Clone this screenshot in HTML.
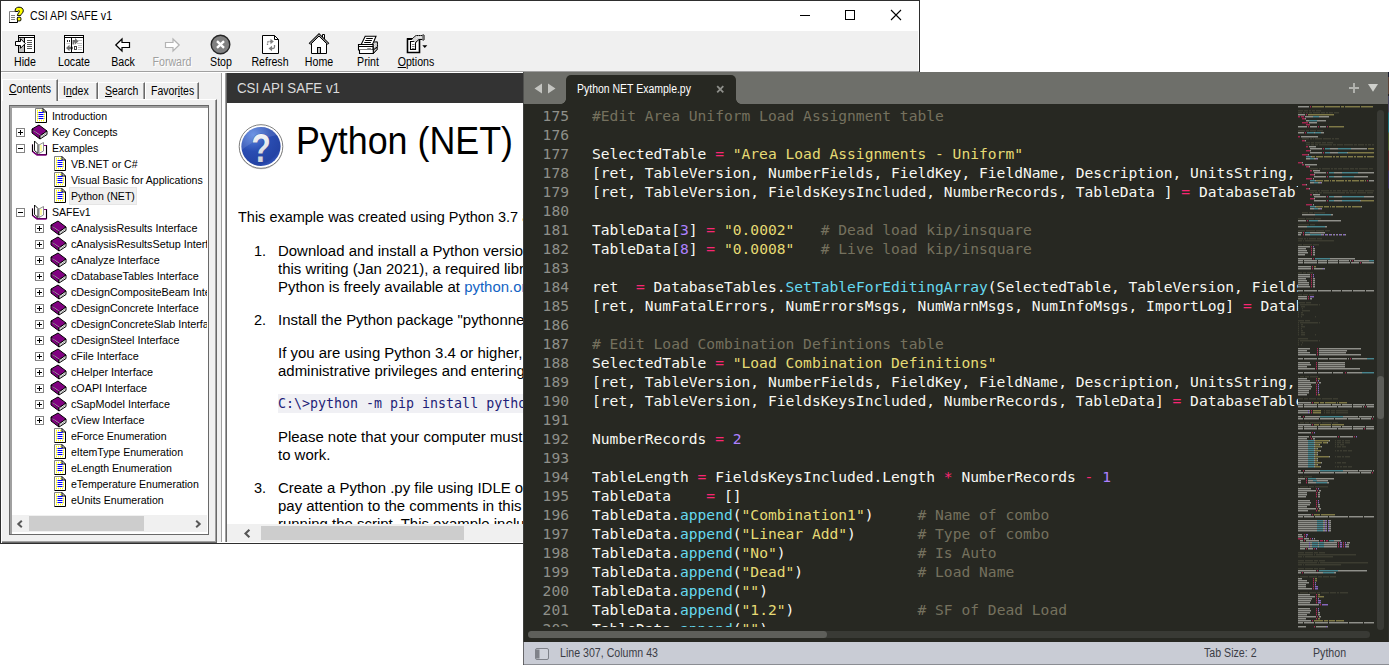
<!DOCTYPE html>
<html><head><meta charset="utf-8"><title>CSI API SAFE v1</title>
<style>
*{box-sizing:border-box;margin:0;padding:0}
html,body{width:1389px;height:665px;overflow:hidden;background:#fff}
body{position:relative;font-family:"Liberation Sans",sans-serif;font-size:12px;color:#000}
.abs{position:absolute}
svg{position:absolute;overflow:visible}
/* ---------- help window ---------- */
#help{position:absolute;left:0;top:0;width:920px;height:544px;background:#fff;overflow:hidden}
#help .frame{position:absolute;left:0;top:0;width:920px;height:544px;border:1px solid #2e2e2e;pointer-events:none}
#title{position:absolute;left:30px;top:8px;font-size:12px;line-height:16px;white-space:nowrap;transform-origin:0 50%;transform:scaleX(.885)}
#toolbar{position:absolute;left:2px;top:31px;width:916px;height:40px;background:#f0f0f0}
.tb{position:absolute;top:55px;width:60px;margin-left:-30px;text-align:center;font-size:12px;line-height:15px;white-space:nowrap;transform:scaleX(.885)}
.tb.dis{color:#a0a0a0;text-shadow:1px 1px 0 #fff}
#sep1{position:absolute;left:1px;top:71px;width:918px;height:1px;background:#a0a0a0}
#nav{position:absolute;left:2px;top:73px;width:224px;height:469px;background:#f0f0f0}

/* nav */
.tab{position:absolute;background:#f0f0f0;border-top:1px solid #fff;border-left:1px solid #fff;border-right:1px solid #696969;font-size:12px}
.tab:after{content:"";position:absolute;right:0;top:0;bottom:0;width:1px;background:#a0a0a0}
.tab span{position:absolute;white-space:nowrap;line-height:14px;transform-origin:0 50%;transform:scaleX(.875)}
.tab.selt{z-index:2}
#pane{position:absolute;left:2px;top:99px;width:215px;height:444px;border-top:1px solid #fff;border-right:1px solid #696969;border-bottom:1px solid #696969;box-shadow:inset -1px -1px 0 #a0a0a0}
#treebox{position:absolute;left:9px;top:105px;width:200px;height:430px;border:1px solid #696969;background:#fff;overflow:hidden}
#treebox:before{content:"";position:absolute;left:0;top:0;width:198px;height:428px;border:solid;border-width:2px 1px 2px 2px;border-color:#a0a0a0 #fff #fff #a0a0a0;pointer-events:none;z-index:3}
#tree{position:absolute;left:2px;top:2px;width:195px;height:407px;overflow:hidden}
.row{position:absolute;left:0;height:16px;width:400px}
.row .t{position:absolute;top:0;font-size:11.5px;line-height:16px;white-space:nowrap;transform-origin:0 50%;transform:scaleX(.918);padding:0 1px}
.row .t.wi{transform:scaleX(.938)}
.row .t.sel{background:#f0f0f0;outline:1px solid #e5e5e5}
.row .ic{top:0}
.pm{position:absolute;top:4px;width:9px;height:9px;border:1px solid #848484;background:#fff}
.pm:before{content:"";position:absolute;left:1px;top:3px;width:5px;height:1px;background:#000}
.pm.plus:after{content:"";position:absolute;left:3px;top:1px;width:1px;height:5px;background:#000}
#hsb{position:absolute;left:2px;top:409px;width:195px;height:17px;background:#f0f0f0}
#hsb .thumb{position:absolute;left:17px;top:1px;width:115px;height:15px;background:#cdcdcd}
#split{position:absolute;left:217px;top:73px;width:10px;height:469px;background:linear-gradient(90deg,#f0f0f0 0,#f0f0f0 4px,#a0a0a0 4px,#a0a0a0 5px,#fff 5px,#fff 8px,#a0a0a0 8px,#a0a0a0 9px,#696969 9px)}

/* content pane */
#cpane{position:absolute;left:227px;top:73px;width:691px;height:469px;background:#fff;overflow:hidden}
#cpane>*{margin-left:1px}
#chead{position:absolute;left:0;top:0;width:691px;height:30px;background:#333;margin-left:0!important}
#chead span{position:absolute;left:10px;top:7px;font-size:13.8px;line-height:18px;color:#dcdcdc;white-space:nowrap;transform-origin:0 50%;transform:scaleX(.966)}
#h1{position:absolute;left:68px;top:43px;font-size:39.5px;line-height:48px;white-space:nowrap;transform-origin:0 50%;transform:scaleX(.907)}
.p{position:absolute;font-size:14.67px;line-height:18px;white-space:nowrap;transform-origin:0 50%;transform:scaleX(.988)}
.p.w{transform:scaleX(1.02)}
.lnk{color:#1364c4}
#cmd{position:absolute;left:50px;top:321px;width:700px;height:19px;background:#f0f0f4;color:#1e1e78;font-family:"DejaVu Sans Mono","Liberation Mono",monospace;font-size:13.3px;line-height:19px;white-space:pre}
#chsb{position:absolute;left:0;top:451px;width:691px;height:18px;background:#f0f0f0;margin-left:0!important}
#chsb .thumb{position:absolute;left:34px;top:2px;width:203px;height:14px;background:#cdcdcd}

/* sublime */
#sublb{position:absolute;left:523px;top:72px;width:1px;height:593px;background:rgba(70,70,70,.75)}
#subl{position:absolute;left:523px;top:72px;width:866px;height:593px;background:#272822;overflow:hidden}
#tabbar{position:absolute;left:0;top:0;width:866px;height:32px;background:#6e6f6a}
#stab{position:absolute;left:43px;top:3px;width:170px;height:29px;background:#272822;border-radius:5px 5px 0 0}
#stab:before,#stab:after{content:"";position:absolute;bottom:0;width:5px;height:5px}
#stab:before{left:-5px;background:radial-gradient(circle at 0 0,rgba(39,40,34,0) 4.5px,#272822 5px)}
#stab:after{right:-5px;background:radial-gradient(circle at 100% 0,rgba(39,40,34,0) 4.5px,#272822 5px)}
#stab span{position:absolute;left:11px;top:7px;font-size:12px;line-height:15px;color:#fff;white-space:nowrap;transform-origin:0 50%;transform:scaleX(.873)}
#editor{position:absolute;left:0;top:32px;width:866px;height:538px;background:#272822;overflow:hidden}
#gutter,#code{position:absolute;top:2px;font-family:"DejaVu Sans Mono","Liberation Mono",monospace;font-size:14.62px;line-height:19px;white-space:pre;height:521px;overflow:hidden}
#gutter{left:0;width:46px;text-align:right;color:#8f908a}
#code{left:69px;width:706px;color:#f8f8f2}
#code .c{color:#75715e}#code .s{color:#e6db74}#code .k{color:#f92672}#code .n{color:#ae81ff}#code .f{color:#66d9ef}
#minimap{position:absolute;left:775px;top:0;width:78px;height:527px;overflow:hidden}
#vsb{position:absolute;left:854px;top:6px;width:7px;height:520px;border-radius:3.5px;background:#393a35}
#vsb i{position:absolute;left:0;top:266px;width:7px;height:43px;border-radius:3.5px;background:#5c5d58}
#edge{position:absolute;left:865px;top:0;width:1px;height:570px;background:linear-gradient(#1a1d30 0,#1a1d30 5px,#5e4337 5px,#5e4337 22px,#222 22px,#222 24px,#494560 24px,#494560 40px,#1c6f7c 41px,#1c6f7c 60px,#4b5a2c 61px,#4b5a2c 78px,#5a2828 79px,#5a2828 98px,#3c3260 99px,#3c3260 116px,#2f302b 117px)}
#hsbar{position:absolute;left:5px;top:527px;width:842px;height:7px;border-radius:3.5px;background:#393a35}
#hsbar i{position:absolute;left:0;top:0;width:299px;height:7px;border-radius:3.5px;background:#5e5f5a}
#status{position:absolute;left:0;top:570px;width:866px;height:23px;background:#c9ccd5;border-bottom:1px solid #8b8d93}
#status span{position:absolute;top:4px;font-size:12px;line-height:15px;color:#3b3d45;white-space:nowrap;transform-origin:0 50%;transform:scaleX(.885)}
</style></head>
<body>
<div id="help">
  <div id="title">CSI API SAFE v1</div>
  <div id="toolbar"></div>
  <div class="tb" style="left:25px">Hide</div>
  <div class="tb" style="left:74px">Locate</div>
  <div class="tb" style="left:123px">Back</div>
  <div class="tb dis" style="left:172px">Forward</div>
  <div class="tb" style="left:221px">Stop</div>
  <div class="tb" style="left:270px">Refresh</div>
  <div class="tb" style="left:319px">Home</div>
  <div class="tb" style="left:368px">Print</div>
  <div class="tb" style="left:416px"><u>O</u>ptions</div>
  <!--ICONS-->
<!-- title icon -->
<svg style="left:9px;top:7px" width="16" height="16" viewBox="0 0 16 16">
  <path d="M.5 4.5H7.5V15.5H.5Z" fill="#fff" stroke="none"/>
  <path d="M.5 15V4.5H6" stroke="#808080" fill="none"/>
  <path d="M0 15.5H8.5V10" stroke="#000" fill="none"/>
  <path d="M2 8.5H6M2 10.5H6M2 12.5H6" stroke="#808080" fill="none"/>
  <path d="M6.2 3.2C6.2 1 8 .2 10 .2C12.6 .2 14.3 1.5 14.3 3.8C14.3 6 12 6.8 11.6 8.6H8.4C8.6 6.2 10.4 5.6 10.4 4.2C10.4 3.4 9.2 3.4 9 4.4L6.2 4.6Z" fill="#ff0" stroke="#000" stroke-width="1"/>
  <rect x="8.3" y="10.3" width="3.6" height="3.6" rx="1" fill="#ff0" stroke="#000" stroke-width="1"/>
</svg>
<!-- window controls -->
<svg style="left:800px;top:9px" width="104" height="13">
  <path d="M0 6.5H10" stroke="#000" stroke-width="1"/>
  <rect x="45.500" y="1.500" width="9" height="9" fill="none" stroke="#000" stroke-width="1"/>
  <path d="M91 1L101 11M101 1L91 11" stroke="#000" stroke-width="1.1" fill="none"/>
</svg>
<!-- Hide -->
<svg style="left:15px;top:35px" width="21" height="19">
  <rect x="3.5" y=".5" width="16" height="17" fill="#fff" stroke="#000"/>
  <path d="M4 2.500H19" stroke="#000"/>
  <rect x="4" y="3" width="5" height="14" fill="#c0c0c0"/>
  <path d="M9.500 3V17" stroke="#000"/>
  <path d="M12 5.500H17M12 7.500H17M12 9.500H17M12 11.500H17M12 13.500H17" stroke="#555"/>
  <path d="M.5 6.500H5.500V3.700L10.300 8.500L5.500 13.300V10.500H.5Z" fill="#fff" stroke="#000"/>
</svg>
<!-- Locate -->
<svg style="left:63px;top:35px" width="22" height="19">
  <rect x="1.500" y=".5" width="19" height="17" fill="#fff" stroke="#000"/>
  <path d="M2 2.500H20" stroke="#000"/>
  <path d="M4 5.500h1M6 5.500h1M4 6.500h1M6 6.500h1" stroke="#333"/>
  <path d="M3.500 8.500H7" stroke="#c8c8c8"/>
  <path d="M15 5.500H19M14 8.500H19M15 10.500H19M15 12.500H19M15 14.500H19" stroke="#c0c0c0"/>
  <path d="M9.500 5H12V3L15.500 6.300L12 9.500V7.600H11.300V9.500H9.500Z" fill="#707070"/>
  <path d="M10 11.800H6.500V9.800L3 13L6.500 16.200V14.200H10Z" fill="#707070"/>
  <path d="M8.500 3V17" stroke="#000" stroke-width="1"/>
  <rect x="11.500" y="11.500" width="2" height="3" fill="#fff" stroke="#333" stroke-width=".9"/>
</svg>
<!-- Back -->
<svg style="left:115px;top:37.500px" width="16" height="15"><path d="M.8 7L7 1V4.500H14.500V9.500H7V13Z" fill="#fff" stroke="#000" stroke-width="1.2" stroke-linejoin="miter"/></svg>
<!-- Forward -->
<svg style="left:164px;top:37.500px" width="16" height="15"><path d="M15.200 7L9 1V4.500H1.500V9.500H9V13Z" fill="#fff" stroke="#b4b4b4" stroke-width="1.200"/></svg>
<!-- Stop -->
<svg style="left:210px;top:34px" width="21" height="21"><circle cx="10.500" cy="10.500" r="9.300" fill="#808080" stroke="#262626" stroke-width="1.400"/><path d="M7 7.200L14 13.800M14 7.200L7 13.800" stroke="#fff" stroke-width="2.400" fill="none"/></svg>
<!-- Refresh -->
<svg style="left:262px;top:35px" width="18" height="20">
  <path d="M.5 .5H12.500L16.500 4.500V18.500H.5Z" fill="#fff" stroke="#000" stroke-width="1"/>
  <path d="M12.500 .5V4.500H16.500" fill="none" stroke="#000" stroke-width="1"/>
  <path d="M5.500 10V8Q5.500 6.500 7 6.500H9" fill="none" stroke="#808080" stroke-width="1.300" stroke-dasharray="1.600 .7"/>
  <path d="M8.500 3.800L11.800 6.500L8.500 9.200Z" fill="#808080"/>
  <path d="M12.500 10V12Q12.500 13.500 11 13.500H9.500" fill="none" stroke="#808080" stroke-width="1.300"/>
  <path d="M10 10.800L6.500 13.500L10 16.200Z" fill="#808080"/>
</svg>
<!-- Home -->
<svg style="left:308px;top:33px" width="22" height="22">
  <path d="M3.500 10.500V20.500H18.500V10.500L11 3Z" fill="#fff" stroke="#000" stroke-width="1"/>
  <path d="M14.500 6V1.500H16.500V8" fill="#fff" stroke="#000" stroke-width="1"/>
  <path d="M1.500 11L11 1.700L20.500 11" fill="none" stroke="#000" stroke-width="2.400" stroke-linejoin="miter"/>
  <path d="M1.800 10.800L11 1.800L20.200 10.800" fill="none" stroke="#fff" stroke-width=".8"/>
  <rect x="9.500" y="14.500" width="3" height="6" fill="#c0c0c0" stroke="#000" stroke-width="1"/>
</svg>
<!-- Print -->
<svg style="left:357px;top:35px" width="22" height="20">
  <path d="M4.200 9.500L8.200 1.300H19L15.600 9.500Z" fill="#fff" stroke="#000" stroke-width="1.100"/>
  <path d="M9.200 3.500H15.800M8.200 5.500H14.900M7.200 7.500H13.800" stroke="#000" stroke-width="1"/>
  <path d="M16 9.500L16.500 7.200L20.300 6.800L20.600 11.600L16.300 15.200Z" fill="#c8c8c8" stroke="#000" stroke-width="1"/>
  <path d="M16.500 8.500L18.500 10.500M18 7.500L20 9.500M16.500 10.500L18 12" stroke="#fff" stroke-width=".7"/>
  <path d="M1.500 9.500H16V15H1.500Z" fill="#fff" stroke="#000" stroke-width="1.100"/>
  <path d="M1.500 11.500H16" stroke="#000" stroke-width="1"/>
  <path d="M10.200 13.500H14" stroke="#909090" stroke-width="1.100"/>
  <path d="M16.300 18.500L20 14.500V12" fill="none" stroke="#000" stroke-width="1"/>
  <path d="M16.300 15.200L20 12V14.500L16.300 18.500Z" fill="#c8c8c8" stroke="#000" stroke-width=".9"/>
  <path d="M2.500 15V18.500H16.300V15" fill="#fff" stroke="#000" stroke-width="1.100"/>
</svg>
<!-- Options -->
<svg style="left:406px;top:34px" width="24" height="21">
  <path d="M1.500 5H13.500V18.500H1.500Z" fill="#fff" stroke="#000" stroke-width="1.600"/>
  <path d="M1 5H14" stroke="#000" stroke-width="2"/>
  <path d="M4.500 7.500H10L9.500 9V15.500H4.500Z" fill="#fff" stroke="#000" stroke-width="1.100"/>
  <path d="M6 10.500H8.500M6 12.500H8.500M6 14.500H8.500" stroke="#808080" stroke-width="1"/>
  <path d="M5.500 5.500L10 1.500H16.500V1H18V6H16.500V5.500H13L9.500 8.500" fill="#d0d0d0" stroke="#000" stroke-width="1"/>
  <path d="M7 5L10.500 2H16M8.500 6L11.500 3.500H16" stroke="#fff" stroke-width=".8" stroke-dasharray="1 1" fill="none"/>
  <path d="M17 1V6" stroke="#707070" stroke-width="1.500"/>
  <path d="M16.300 11.200H21.300L18.800 13.900Z" fill="#000"/>
</svg>

<!--/ICONS-->
  <div id="sep1"></div>
  <div id="nav"></div>
  <!--NAV-->
<svg width="0" height="0" style="position:absolute"><defs>
<g id="pg"><path d="M0.5 0.5H8L11.5 4V14.5H0.5Z" fill="#fff"/><path d="M0.5 0.5V14.5" stroke="#808080" fill="none"/><path d="M0.5 0.5H8" stroke="#808080" fill="none"/><path d="M0.5 14.5H11.5V4L8 0.5V4H11.5" stroke="#000" fill="none"/><path d="M2 2h1M4 2h1M6 2h1M2 4h1M2 6h1M2 8h1M2 10h1M2 12h1M4 12h1M6 12h1M8 12h1M9 6h1M9 8h1M9 10h1" stroke="#ff0" stroke-width="1.4" fill="none" transform="translate(0,.5)"/><path d="M3.5 4.5h5M3.5 6.5h5M3.5 8.5h5M3.5 10.5h5" stroke="#00f" stroke-width="1.1" fill="none"/></g>
<g id="bk"><path d="M1 5L8 1L16 7L9 12Z" fill="#800080" stroke="#000" stroke-width="1"/><path d="M1 5V9L9 15V12Z" fill="#800080" stroke="#000" stroke-width="1"/><path d="M9 12L16 7V10.5L9 15Z" fill="#fff" stroke="#000" stroke-width="1"/><path d="M2.5 6.5L9.5 11.5" stroke="#d8a0d8" stroke-width=".8"/><path d="M10.5 12.8L15 9.5" stroke="#808080" stroke-width=".8"/></g>
<g id="ob"><path d="M1.5 4.5V11.5L6 14.5H15.5V5.5H13" fill="#fff" stroke="#800080" stroke-width="1.2"/><path d="M1.5 4.5V11.5L6 14.5H15.5V5.5" fill="none" stroke="#000" stroke-width="1"/><path d="M3.5 1L7 4.5V13.5L3.5 10.5Z" fill="#fff" stroke="#000" stroke-width=".9"/><path d="M8 5L12.5 2.5V11L8 13.5Z" fill="#fff" stroke="#808080" stroke-width=".9"/><path d="M10 5.5v1M10 7.5v1M10 9.5v1" stroke="#ff0" stroke-width="1.4"/><path d="M2 12L6 15H15.5" stroke="#800080" stroke-width="1.3" fill="none"/></g>
</defs></svg>
<div id="tabs">
  <div class="tab selt" style="left:2px;top:79px;width:56px;height:22px"><span style="left:5.500px;top:2px"><u>C</u>ontents</span></div>
  <div class="tab" style="left:58px;top:82px;width:40px;height:18px"><span style="left:4px;top:1px">I<u>n</u>dex</span></div>
  <div class="tab" style="left:98px;top:82px;width:47px;height:18px"><span style="left:6px;top:1px"><u>S</u>earch</span></div>
  <div class="tab" style="left:145px;top:82px;width:54px;height:18px"><span style="left:5px;top:1px">Favor<u>i</u>tes</span></div>
</div>
<div id="pane"></div>
<div id="treebox">
<div id="tree">
<div class="row" style="top:0px"><svg class="ic" style="left:23px" width="13" height="16"><use href="#pg"/></svg><span class="t" style="left:39px">Introduction</span></div>
<div class="row" style="top:16px"><i class="pm plus" style="left:4px"></i><svg class="ic" style="left:19px" width="17" height="16"><use href="#bk"/></svg><span class="t" style="left:39px">Key Concepts</span></div>
<div class="row" style="top:32px"><i class="pm minus" style="left:4px"></i><svg class="ic" style="left:19px" width="17" height="16"><use href="#ob"/></svg><span class="t" style="left:39px">Examples</span></div>
<div class="row" style="top:48px"><svg class="ic" style="left:42px" width="13" height="16"><use href="#pg"/></svg><span class="t" style="left:58px">VB.NET or C#</span></div>
<div class="row" style="top:64px"><svg class="ic" style="left:42px" width="13" height="16"><use href="#pg"/></svg><span class="t" style="left:58px">Visual Basic for Applications</span></div>
<div class="row" style="top:80px"><svg class="ic" style="left:42px" width="13" height="16"><use href="#pg"/></svg><span class="t sel" style="left:58px">Python (NET)</span></div>
<div class="row" style="top:96px"><i class="pm minus" style="left:4px"></i><svg class="ic" style="left:19px" width="17" height="16"><use href="#ob"/></svg><span class="t" style="left:39px">SAFEv1</span></div>
<div class="row" style="top:112px"><i class="pm plus" style="left:23px"></i><svg class="ic" style="left:38px" width="17" height="16"><use href="#bk"/></svg><span class="t wi" style="left:58px">cAnalysisResults Interface</span></div>
<div class="row" style="top:128px"><i class="pm plus" style="left:23px"></i><svg class="ic" style="left:38px" width="17" height="16"><use href="#bk"/></svg><span class="t wi" style="left:58px">cAnalysisResultsSetup Interface</span></div>
<div class="row" style="top:144px"><i class="pm plus" style="left:23px"></i><svg class="ic" style="left:38px" width="17" height="16"><use href="#bk"/></svg><span class="t wi" style="left:58px">cAnalyze Interface</span></div>
<div class="row" style="top:160px"><i class="pm plus" style="left:23px"></i><svg class="ic" style="left:38px" width="17" height="16"><use href="#bk"/></svg><span class="t wi" style="left:58px">cDatabaseTables Interface</span></div>
<div class="row" style="top:176px"><i class="pm plus" style="left:23px"></i><svg class="ic" style="left:38px" width="17" height="16"><use href="#bk"/></svg><span class="t wi" style="left:58px">cDesignCompositeBeam Interface</span></div>
<div class="row" style="top:192px"><i class="pm plus" style="left:23px"></i><svg class="ic" style="left:38px" width="17" height="16"><use href="#bk"/></svg><span class="t wi" style="left:58px">cDesignConcrete Interface</span></div>
<div class="row" style="top:208px"><i class="pm plus" style="left:23px"></i><svg class="ic" style="left:38px" width="17" height="16"><use href="#bk"/></svg><span class="t wi" style="left:58px">cDesignConcreteSlab Interface</span></div>
<div class="row" style="top:224px"><i class="pm plus" style="left:23px"></i><svg class="ic" style="left:38px" width="17" height="16"><use href="#bk"/></svg><span class="t wi" style="left:58px">cDesignSteel Interface</span></div>
<div class="row" style="top:240px"><i class="pm plus" style="left:23px"></i><svg class="ic" style="left:38px" width="17" height="16"><use href="#bk"/></svg><span class="t wi" style="left:58px">cFile Interface</span></div>
<div class="row" style="top:256px"><i class="pm plus" style="left:23px"></i><svg class="ic" style="left:38px" width="17" height="16"><use href="#bk"/></svg><span class="t wi" style="left:58px">cHelper Interface</span></div>
<div class="row" style="top:272px"><i class="pm plus" style="left:23px"></i><svg class="ic" style="left:38px" width="17" height="16"><use href="#bk"/></svg><span class="t wi" style="left:58px">cOAPI Interface</span></div>
<div class="row" style="top:288px"><i class="pm plus" style="left:23px"></i><svg class="ic" style="left:38px" width="17" height="16"><use href="#bk"/></svg><span class="t wi" style="left:58px">cSapModel Interface</span></div>
<div class="row" style="top:304px"><i class="pm plus" style="left:23px"></i><svg class="ic" style="left:38px" width="17" height="16"><use href="#bk"/></svg><span class="t wi" style="left:58px">cView Interface</span></div>
<div class="row" style="top:320px"><svg class="ic" style="left:42px" width="13" height="16"><use href="#pg"/></svg><span class="t" style="left:58px">eForce Enumeration</span></div>
<div class="row" style="top:336px"><svg class="ic" style="left:42px" width="13" height="16"><use href="#pg"/></svg><span class="t" style="left:58px">eItemType Enumeration</span></div>
<div class="row" style="top:352px"><svg class="ic" style="left:42px" width="13" height="16"><use href="#pg"/></svg><span class="t" style="left:58px">eLength Enumeration</span></div>
<div class="row" style="top:368px"><svg class="ic" style="left:42px" width="13" height="16"><use href="#pg"/></svg><span class="t" style="left:58px">eTemperature Enumeration</span></div>
<div class="row" style="top:384px"><svg class="ic" style="left:42px" width="13" height="16"><use href="#pg"/></svg><span class="t" style="left:58px">eUnits Enumeration</span></div>
</div>
  <div id="hsb"><i class="thumb"></i>
    <svg style="left:5px;top:5px" width="6" height="9"><path d="M4.800 .8L1.300 4L4.800 7.200" fill="none" stroke="#585858" stroke-width="2"/></svg>
    <svg style="left:183px;top:5px" width="6" height="9"><path d="M1.200 .8L4.700 4L1.200 7.200" fill="none" stroke="#585858" stroke-width="2"/></svg>
  </div>
</div>
<div id="split"></div>

<!--/NAV-->
  <!--CONTENT-->
<div id="cpane">
  <div id="chead"><span>CSI API SAFE v1</span></div>
  <svg style="left:10px;top:50px" width="46" height="47" viewBox="0 0 46 47">
    <defs>
      <radialGradient id="qg" cx="0.3" cy="0.2" r="0.95"><stop offset="0" stop-color="#5a86e0"/><stop offset="0.45" stop-color="#2a4db2"/><stop offset="0.8" stop-color="#2443a4"/><stop offset="1" stop-color="#4468d0"/></radialGradient>
      <linearGradient id="qs" x1="0" y1="0" x2="0" y2="1"><stop offset="0" stop-color="#fff"/><stop offset="1" stop-color="#c4c8d2"/></linearGradient>
    </defs>
    <circle cx="23" cy="24.300" r="22" fill="#777" opacity=".45"/>
    <circle cx="23" cy="23.500" r="21.800" fill="#fff" stroke="#808080" stroke-width="1"/>
    <circle cx="23" cy="23.500" r="19.600" fill="url(#qg)"/>
    <path d="M4 27 A19.500 19.500 0 0 1 39 12 C28 14 12 19 4 27Z" fill="#fff" opacity=".12"/>
    <text transform="translate(23,38.800) scale(.78,1)" text-anchor="middle" font-family="Liberation Sans, sans-serif" font-weight="bold" font-size="41" fill="url(#qs)" stroke="#1c348a" stroke-width=".6" paint-order="stroke">?</text>
  </svg>
  <div id="h1">Python (NET)</div>
  <div class="p" style="left:10px;top:135px">This example was created using Python 3.7 and</div>
  <div class="p" style="left:26px;top:169px">1.</div>
  <div class="p w" style="left:50px;top:169px">Download and install a Python version for Windows. At the time of<br>this writing (Jan 2021), a required library was only available for<br>Python is freely available at <span class="lnk">python.org</span></div>
  <div class="p" style="left:26px;top:238px">2.</div>
  <div class="p w" style="left:50px;top:238px">Install the Python package "pythonnet" for your Python installation.</div>
  <div class="p w" style="left:50px;top:271px">If you are using Python 3.4 or higher, you can do this by opening with<br>administrative privileges and entering the following command</div>
  <div id="cmd">C:\&gt;python -m pip install pythonnet</div>
  <div class="p w" style="left:50px;top:355px">Please note that your computer must be connected to the internet<br>to work.</div>
  <div class="p" style="left:26px;top:406px">3.</div>
  <div class="p w" style="left:50px;top:406px">Create a Python .py file using IDLE or any text editor and<br>pay attention to the comments in this example before<br>running the script. This example includes</div>
  <div id="chsb"><i class="thumb"></i>
    <svg style="left:17px;top:5px" width="7" height="10"><path d="M5.400 .8L1.500 4.500L5.400 8.200" fill="none" stroke="#555" stroke-width="2.100"/></svg>
  </div>
</div>

<!--/CONTENT-->
  <div class="frame"></div>
</div>
<!--SUBLIME-->
<div id="subl">
  <div id="tabbar">
    <svg style="left:11px;top:11px" width="24" height="11"><path d="M8 0.5V10.5L0.5 5.5Z M14 0.5V10.5L21.5 5.5Z" fill="#c4c5c1"/></svg>
    <div id="stab"><span>Python NET Example.py</span>
      <svg style="left:150px;top:10px" width="9" height="9"><path d="M1.200 1.200L7.300 7.300M7.300 1.200L1.200 7.300" stroke="#8e8f8a" stroke-width="1.800" fill="none"/></svg>
    </div>
    <svg style="left:826px;top:11px" width="34" height="10"><path d="M0 5H10M5 0V10" stroke="#b3b4b0" stroke-width="1.9" fill="none"/><path d="M19 1H29L24 8.700Z" fill="#cfd0cc"/></svg>
  </div>
  <div id="editor">
<div id="gutter">175
176
177
178
179
180
181
182
183
184
185
186
187
188
189
190
191
192
193
194
195
196
197
198
199
200
201
202</div>
<div id="code"><span class="c">#Edit Area Uniform Load Assignment table</span>

SelectedTable <span class="k">=</span> <span class="s">"Area Load Assignments - Uniform"</span>
[ret, TableVersion, NumberFields, FieldKey, FieldName, Description, UnitsString, isImportable] <span class="k">=</span> DatabaseTables.<span class="f">GetAllFieldsInTable</span>(SelectedTable)
[ret, TableVersion, FieldsKeysIncluded, NumberRecords, TableData ] <span class="k">=</span> DatabaseTables.<span class="f">GetTableForEditingArray</span>(SelectedTable)

TableData[<span class="n">3</span>] <span class="k">=</span> <span class="s">"0.0002"</span>   <span class="c"># Dead load kip/insquare</span>
TableData[<span class="n">8</span>] <span class="k">=</span> <span class="s">"0.0008"</span>   <span class="c"># Live load kip/insquare</span>

ret  <span class="k">=</span> DatabaseTables.<span class="f">SetTableForEditingArray</span>(SelectedTable, TableVersion, FieldsKeysIncluded, NumberRecords, TableData)
[ret, NumFatalErrors, NumErrorsMsgs, NumWarnMsgs, NumInfoMsgs, ImportLog] <span class="k">=</span> DatabaseTables.<span class="f">ApplyEditedTables</span>(<span class="n">True</span>)

<span class="c"># Edit Load Combination Defintions table</span>
SelectedTable <span class="k">=</span> <span class="s">"Load Combination Definitions"</span>
[ret, TableVersion, NumberFields, FieldKey, FieldName, Description, UnitsString, isImportable] <span class="k">=</span> DatabaseTables.<span class="f">GetAllFieldsInTable</span>(SelectedTable)
[ret, TableVersion, FieldsKeysIncluded, NumberRecords, TableData] <span class="k">=</span> DatabaseTables.<span class="f">GetTableForEditingArray</span>(SelectedTable)

NumberRecords <span class="k">=</span> <span class="n">2</span>

TableLength <span class="k">=</span> FieldsKeysIncluded.Length <span class="k">*</span> NumberRecords <span class="k">-</span> <span class="n">1</span>
TableData    <span class="k">=</span> []
TableData.<span class="f">append</span>(<span class="s">"Combination1"</span>)     <span class="c"># Name of combo</span>
TableData.<span class="f">append</span>(<span class="s">"Linear Add"</span>)       <span class="c"># Type of combo</span>
TableData.<span class="f">append</span>(<span class="s">"No"</span>)               <span class="c"># Is Auto</span>
TableData.<span class="f">append</span>(<span class="s">"Dead"</span>)             <span class="c"># Load Name</span>
TableData.<span class="f">append</span>(<span class="s">""</span>)
TableData.<span class="f">append</span>(<span class="s">"1.2"</span>)              <span class="c"># SF of Dead Load</span>
TableData.<span class="f">append</span>(<span class="s">""</span>)</div>
    <div id="minimap"><svg style="left:0;top:0" width="78" height="528" shape-rendering="crispEdges">
<path d="M0 2.5h11M0 10.5h7M7 12.5h8M21 12.5h10M7 14.5h1M8 16.5h3M19 16.5h9M11 18.5h8M0 22.5h9M12 22.5h7M22 22.5h6M0 28.5h6M16 28.5h1M23 28.5h3M3 32.5h17M7 36.5h1M11 42.5h7M12 44.5h12M32 44.5h8M53 44.5h16M12 46.5h1M12 48.5h12M32 48.5h8M49 48.5h1M10 50.5h1M13 52.5h1M8 54.5h4M16 54.5h2M19 54.5h1M4 58.5h1M7 60.5h12M11 62.5h1M15 66.5h7M16 68.5h12M36 68.5h8M60 68.5h16M16 70.5h1M16 72.5h12M36 72.5h8M56 72.5h14M15 74.5h1M17 76.5h1M71 76.5h5M12 78.5h4M20 78.5h2M23 78.5h1M8 80.5h1M11 84.5h1M15 90.5h7M16 92.5h12M36 92.5h8M66 92.5h10M16 94.5h1M16 96.5h12M36 96.5h8M62 96.5h1M15 100.5h1M17 102.5h1M63 102.5h1M12 104.5h4M20 104.5h2M23 104.5h1M4 110.5h13M33 110.5h2M0 116.5h8M20 116.5h23M0 122.5h9M27 122.5h2M0 128.5h4M12 128.5h15M0 130.5h3M7 130.5h5M23 130.5h1M25 130.5h1M29 130.5h1M33 130.5h1M36 130.5h1M39 130.5h1M43 130.5h1M47 130.5h1M0 142.5h12M0 144.5h8M15 144.5h2M0 146.5h9M15 146.5h2M0 148.5h10M15 148.5h2M0 150.5h7M15 150.5h2M0 154.5h14M32 154.5h25M0 156.5h5M6 156.5h13M20 156.5h9M30 156.5h10M41 156.5h10M52 156.5h1M56 156.5h15M0 158.5h5M6 158.5h13M20 158.5h9M30 158.5h10M41 158.5h11M53 158.5h8M64 158.5h12M0 162.5h13M0 164.5h13M16 164.5h9M26 164.5h1M0 170.5h12M0 172.5h12M0 174.5h8M15 174.5h2M0 176.5h9M15 176.5h2M0 178.5h11M15 178.5h2M0 180.5h11M15 180.5h2M0 182.5h12M15 182.5h2M0 186.5h5M6 186.5h13M20 186.5h13M34 186.5h9M44 186.5h10M55 186.5h12M68 186.5h8M0 192.5h9M0 194.5h9M12 194.5h2M0 244.5h12M21 244.5h42M0 246.5h9M21 246.5h28M0 248.5h12M21 248.5h27M0 250.5h18M21 250.5h42M0 254.5h5M6 254.5h13M20 254.5h10M31 254.5h18M50 254.5h1M54 254.5h15M0 258.5h12M20 258.5h27M0 260.5h13M20 260.5h27M0 262.5h9M20 262.5h27M0 264.5h17M20 264.5h42M0 268.5h5M6 268.5h13M20 268.5h14M35 268.5h10M49 268.5h15M0 274.5h9M0 276.5h12M0 278.5h18M21 278.5h2M0 280.5h13M0 282.5h14M0 284.5h13M0 286.5h11M0 288.5h11M0 290.5h9M0 298.5h13M0 300.5h5M6 300.5h13M20 300.5h13M34 300.5h9M44 300.5h10M55 300.5h12M68 300.5h8M0 302.5h5M6 302.5h13M20 302.5h19M40 302.5h14M55 302.5h9M65 302.5h1M69 302.5h7M0 306.5h10M11 306.5h1M0 308.5h10M11 308.5h1M0 312.5h3M7 312.5h15M45 312.5h15M61 312.5h13M75 312.5h1M0 314.5h5M6 314.5h15M22 314.5h14M37 314.5h12M50 314.5h12M63 314.5h10M0 320.5h13M0 322.5h5M6 322.5h13M20 322.5h13M34 322.5h9M44 322.5h10M55 322.5h12M68 322.5h8M0 324.5h5M6 324.5h13M20 324.5h19M40 324.5h14M55 324.5h10M68 324.5h8M0 328.5h13M0 332.5h11M14 332.5h25M42 332.5h13M0 334.5h9M15 334.5h2M0 336.5h10M16 336.5h1M31 336.5h1M0 338.5h10M16 338.5h1M29 338.5h1M0 340.5h10M16 340.5h1M21 340.5h1M0 342.5h10M16 342.5h1M23 342.5h1M0 344.5h10M16 344.5h1M19 344.5h1M0 346.5h10M16 346.5h1M22 346.5h1M0 348.5h10M16 348.5h1M19 348.5h1M0 350.5h10M16 350.5h1M19 350.5h1M0 352.5h10M16 352.5h1M31 352.5h1M0 354.5h10M16 354.5h1M19 354.5h1M0 356.5h10M16 356.5h1M19 356.5h1M0 358.5h10M16 358.5h1M23 358.5h1M0 360.5h10M16 360.5h1M19 360.5h1M0 362.5h10M16 362.5h1M22 362.5h1M0 366.5h3M7 366.5h15M45 366.5h15M61 366.5h13M75 366.5h1M0 368.5h5M6 368.5h15M22 368.5h14M37 368.5h12M50 368.5h12M63 368.5h10M0 374.5h7M18 374.5h18M0 376.5h3M10 376.5h5M19 376.5h11M0 378.5h3M10 378.5h8M29 378.5h2M0 384.5h13M0 386.5h18M21 386.5h2M0 388.5h9M20 388.5h2M0 390.5h9M20 390.5h2M0 392.5h8M20 392.5h2M0 396.5h12M0 398.5h13M0 400.5h12M20 400.5h2M0 402.5h9M20 402.5h2M0 404.5h18M21 404.5h2M0 406.5h10M0 410.5h13M0 412.5h5M6 412.5h10M17 412.5h13M31 412.5h19M51 412.5h14M66 412.5h10M0 416.5h19M25 416.5h2M28 416.5h1M31 416.5h2M0 418.5h19M25 418.5h2M28 418.5h1M31 418.5h2M0 420.5h19M25 420.5h2M28 420.5h1M31 420.5h2M0 422.5h19M25 422.5h2M28 422.5h1M31 422.5h2M0 424.5h19M25 424.5h2M28 424.5h1M31 424.5h2M0 426.5h19M25 426.5h2M28 426.5h1M31 426.5h2M0 430.5h4M0 432.5h5M6 434.5h5M16 434.5h1M2 436.5h3M8 436.5h13M26 436.5h1M36 436.5h7M2 438.5h9M12 438.5h2M20 438.5h1M26 438.5h13M49 438.5h3M2 440.5h9M12 440.5h2M20 440.5h1M26 440.5h13M48 440.5h3M2 442.5h9M12 442.5h2M20 442.5h1M26 442.5h13M48 442.5h3M2 444.5h5M10 444.5h5M0 466.5h18M40 466.5h29M0 468.5h3M6 468.5h19M36 468.5h2M0 474.5h4M0 476.5h9M0 478.5h11M0 480.5h8M0 482.5h8M0 484.5h14M0 490.5h12M0 492.5h17M0 494.5h14M0 496.5h13M0 498.5h12M0 500.5h21M0 504.5h12M0 506.5h13M0 508.5h12M20 508.5h2M0 510.5h9M20 510.5h2M0 512.5h18M21 512.5h2M0 514.5h8M0 516.5h13M0 518.5h5M6 518.5h10M17 518.5h13M31 518.5h19M51 518.5h14M66 518.5h10M0 522.5h8M18 522.5h10M29 522.5h1" stroke="#f8f8f2" stroke-opacity="0.5" fill="none"/>
<path d="M0 3.5h11M0 11.5h7M7 13.5h8M21 13.5h10M7 15.5h1M8 17.5h3M19 17.5h9M11 19.5h8M0 23.5h9M12 23.5h7M22 23.5h6M0 29.5h6M16 29.5h1M23 29.5h3M3 33.5h17M7 37.5h1M11 43.5h7M12 45.5h12M32 45.5h8M53 45.5h16M12 47.5h1M12 49.5h12M32 49.5h8M49 49.5h1M10 51.5h1M13 53.5h1M8 55.5h4M16 55.5h2M19 55.5h1M4 59.5h1M7 61.5h12M11 63.5h1M15 67.5h7M16 69.5h12M36 69.5h8M60 69.5h16M16 71.5h1M16 73.5h12M36 73.5h8M56 73.5h14M15 75.5h1M17 77.5h1M71 77.5h5M12 79.5h4M20 79.5h2M23 79.5h1M8 81.5h1M11 85.5h1M15 91.5h7M16 93.5h12M36 93.5h8M66 93.5h10M16 95.5h1M16 97.5h12M36 97.5h8M62 97.5h1M15 101.5h1M17 103.5h1M63 103.5h1M12 105.5h4M20 105.5h2M23 105.5h1M4 111.5h13M33 111.5h2M0 117.5h8M20 117.5h23M0 123.5h9M27 123.5h2M0 129.5h4M12 129.5h15M0 131.5h3M7 131.5h5M23 131.5h1M25 131.5h1M29 131.5h1M33 131.5h1M36 131.5h1M39 131.5h1M43 131.5h1M47 131.5h1M0 143.5h12M0 145.5h8M15 145.5h2M0 147.5h9M15 147.5h2M0 149.5h10M15 149.5h2M0 151.5h7M15 151.5h2M0 155.5h14M32 155.5h25M0 157.5h5M6 157.5h13M20 157.5h9M30 157.5h10M41 157.5h10M52 157.5h1M56 157.5h15M0 159.5h5M6 159.5h13M20 159.5h9M30 159.5h10M41 159.5h11M53 159.5h8M64 159.5h12M0 163.5h13M0 165.5h13M16 165.5h9M26 165.5h1M0 171.5h12M0 173.5h12M0 175.5h8M15 175.5h2M0 177.5h9M15 177.5h2M0 179.5h11M15 179.5h2M0 181.5h11M15 181.5h2M0 183.5h12M15 183.5h2M0 187.5h5M6 187.5h13M20 187.5h13M34 187.5h9M44 187.5h10M55 187.5h12M68 187.5h8M0 193.5h9M0 195.5h9M12 195.5h2M0 245.5h12M21 245.5h42M0 247.5h9M21 247.5h28M0 249.5h12M21 249.5h27M0 251.5h18M21 251.5h42M0 255.5h5M6 255.5h13M20 255.5h10M31 255.5h18M50 255.5h1M54 255.5h15M0 259.5h12M20 259.5h27M0 261.5h13M20 261.5h27M0 263.5h9M20 263.5h27M0 265.5h17M20 265.5h42M0 269.5h5M6 269.5h13M20 269.5h14M35 269.5h10M49 269.5h15M0 275.5h9M0 277.5h12M0 279.5h18M21 279.5h2M0 281.5h13M0 283.5h14M0 285.5h13M0 287.5h11M0 289.5h11M0 291.5h9M0 299.5h13M0 301.5h5M6 301.5h13M20 301.5h13M34 301.5h9M44 301.5h10M55 301.5h12M68 301.5h8M0 303.5h5M6 303.5h13M20 303.5h19M40 303.5h14M55 303.5h9M65 303.5h1M69 303.5h7M0 307.5h10M11 307.5h1M0 309.5h10M11 309.5h1M0 313.5h3M7 313.5h15M45 313.5h15M61 313.5h13M75 313.5h1M0 315.5h5M6 315.5h15M22 315.5h14M37 315.5h12M50 315.5h12M63 315.5h10M0 321.5h13M0 323.5h5M6 323.5h13M20 323.5h13M34 323.5h9M44 323.5h10M55 323.5h12M68 323.5h8M0 325.5h5M6 325.5h13M20 325.5h19M40 325.5h14M55 325.5h10M68 325.5h8M0 329.5h13M0 333.5h11M14 333.5h25M42 333.5h13M0 335.5h9M15 335.5h2M0 337.5h10M16 337.5h1M31 337.5h1M0 339.5h10M16 339.5h1M29 339.5h1M0 341.5h10M16 341.5h1M21 341.5h1M0 343.5h10M16 343.5h1M23 343.5h1M0 345.5h10M16 345.5h1M19 345.5h1M0 347.5h10M16 347.5h1M22 347.5h1M0 349.5h10M16 349.5h1M19 349.5h1M0 351.5h10M16 351.5h1M19 351.5h1M0 353.5h10M16 353.5h1M31 353.5h1M0 355.5h10M16 355.5h1M19 355.5h1M0 357.5h10M16 357.5h1M19 357.5h1M0 359.5h10M16 359.5h1M23 359.5h1M0 361.5h10M16 361.5h1M19 361.5h1M0 363.5h10M16 363.5h1M22 363.5h1M0 367.5h3M7 367.5h15M45 367.5h15M61 367.5h13M75 367.5h1M0 369.5h5M6 369.5h15M22 369.5h14M37 369.5h12M50 369.5h12M63 369.5h10M0 375.5h7M18 375.5h18M0 377.5h3M10 377.5h5M19 377.5h11M0 379.5h3M10 379.5h8M29 379.5h2M0 385.5h13M0 387.5h18M21 387.5h2M0 389.5h9M20 389.5h2M0 391.5h9M20 391.5h2M0 393.5h8M20 393.5h2M0 397.5h12M0 399.5h13M0 401.5h12M20 401.5h2M0 403.5h9M20 403.5h2M0 405.5h18M21 405.5h2M0 407.5h10M0 411.5h13M0 413.5h5M6 413.5h10M17 413.5h13M31 413.5h19M51 413.5h14M66 413.5h10M0 417.5h19M25 417.5h2M28 417.5h1M31 417.5h2M0 419.5h19M25 419.5h2M28 419.5h1M31 419.5h2M0 421.5h19M25 421.5h2M28 421.5h1M31 421.5h2M0 423.5h19M25 423.5h2M28 423.5h1M31 423.5h2M0 425.5h19M25 425.5h2M28 425.5h1M31 425.5h2M0 427.5h19M25 427.5h2M28 427.5h1M31 427.5h2M0 431.5h4M0 433.5h5M6 435.5h5M16 435.5h1M2 437.5h3M8 437.5h13M26 437.5h1M36 437.5h7M2 439.5h9M12 439.5h2M20 439.5h1M26 439.5h13M49 439.5h3M2 441.5h9M12 441.5h2M20 441.5h1M26 441.5h13M48 441.5h3M2 443.5h9M12 443.5h2M20 443.5h1M26 443.5h13M48 443.5h3M2 445.5h5M10 445.5h5M0 467.5h18M40 467.5h29M0 469.5h3M6 469.5h19M36 469.5h2M0 475.5h4M0 477.5h9M0 479.5h11M0 481.5h8M0 483.5h8M0 485.5h14M0 491.5h12M0 493.5h17M0 495.5h14M0 497.5h13M0 499.5h12M0 501.5h21M0 505.5h12M0 507.5h13M0 509.5h12M20 509.5h2M0 511.5h9M20 511.5h2M0 513.5h18M21 513.5h2M0 515.5h8M0 517.5h13M0 519.5h5M6 519.5h10M17 519.5h13M31 519.5h19M51 519.5h14M66 519.5h10M0 523.5h8M18 523.5h10M29 523.5h1" stroke="#f8f8f2" stroke-opacity="0.23" fill="none"/>
<path d="M0 6.5h5M6 6.5h4M11 6.5h2M14 6.5h3M18 6.5h5M0 8.5h4M5 8.5h2M8 8.5h2M11 8.5h3M15 8.5h7M23 8.5h4M28 8.5h2M31 8.5h4M36 8.5h5M0 26.5h7M8 26.5h3M12 26.5h6M19 26.5h6M4 34.5h7M12 34.5h2M15 34.5h1M17 34.5h7M25 34.5h8M34 34.5h2M37 34.5h4M8 38.5h4M13 38.5h3M17 38.5h6M24 38.5h4M29 38.5h6M8 40.5h4M13 40.5h3M17 40.5h3M21 40.5h13M35 40.5h3M39 40.5h6M46 40.5h9M56 40.5h3M60 40.5h6M67 40.5h2M70 40.5h3M74 40.5h2M12 64.5h8M21 64.5h2M24 64.5h8M33 64.5h2M36 64.5h3M40 64.5h4M45 64.5h6M52 64.5h4M57 64.5h3M61 64.5h9M71 64.5h4M12 86.5h7M20 86.5h2M23 86.5h8M32 86.5h2M35 86.5h3M39 86.5h4M44 86.5h6M51 86.5h4M56 86.5h3M60 86.5h6M67 86.5h9M12 88.5h4M17 88.5h3M21 88.5h3M25 88.5h22M48 88.5h3M52 88.5h6M59 88.5h9M69 88.5h6M4 108.5h6M11 108.5h4M16 108.5h11M0 114.5h7M8 114.5h8M17 114.5h6M0 120.5h11M12 120.5h5M0 126.5h7M8 126.5h9M18 126.5h8M27 126.5h5M0 134.5h5M6 134.5h2M9 134.5h1M11 134.5h7M19 134.5h5M0 136.5h4M5 136.5h1M7 136.5h29M0 140.5h4M5 140.5h9M15 140.5h6M0 168.5h4M5 168.5h3M9 168.5h6M0 190.5h4M5 190.5h5M11 190.5h5M0 198.5h7M8 198.5h5M0 200.5h1M2 200.5h18M21 200.5h1M0 202.5h1M3 202.5h4M0 204.5h1M4 204.5h1M0 206.5h1M4 206.5h8M0 208.5h1M3 208.5h2M0 210.5h1M3 210.5h3M0 212.5h1M3 212.5h1M17 212.5h1M0 216.5h6M7 216.5h5M0 218.5h1M2 218.5h18M21 218.5h1M0 220.5h1M3 220.5h2M0 222.5h1M3 222.5h4M0 224.5h1M3 224.5h1M0 226.5h1M3 226.5h2M0 228.5h1M3 228.5h4M0 230.5h1M3 230.5h4M17 230.5h1M0 234.5h10M0 236.5h1M2 236.5h18M21 236.5h1M0 238.5h1M4 238.5h1M0 240.5h1M3 240.5h1M0 272.5h1M2 272.5h4M7 272.5h4M12 272.5h8M0 294.5h5M6 294.5h4M11 294.5h7M19 294.5h4M24 294.5h10M35 294.5h5M26 306.5h1M28 306.5h4M33 306.5h4M38 306.5h12M26 308.5h1M28 308.5h4M33 308.5h4M38 308.5h12M0 318.5h1M2 318.5h4M7 318.5h4M12 318.5h11M24 318.5h10M35 318.5h5M37 336.5h1M39 336.5h4M44 336.5h2M47 336.5h5M37 338.5h1M39 338.5h4M44 338.5h2M47 338.5h5M37 340.5h1M39 340.5h2M42 340.5h4M37 342.5h1M39 342.5h4M44 342.5h4M37 346.5h1M39 346.5h2M42 346.5h2M45 346.5h4M50 346.5h4M37 352.5h1M39 352.5h4M44 352.5h2M47 352.5h5M37 358.5h1M39 358.5h4M44 358.5h4M37 362.5h1M39 362.5h2M42 362.5h2M45 362.5h4M50 362.5h4M0 372.5h1M2 372.5h3M6 372.5h8M0 382.5h1M2 382.5h8M11 382.5h5M17 382.5h13M0 448.5h6M7 448.5h8M16 448.5h4M21 448.5h6M0 450.5h15M16 450.5h1M18 450.5h40M0 452.5h4M5 452.5h1M7 452.5h28M0 456.5h6M7 456.5h8M16 456.5h4M21 456.5h6M0 458.5h19M20 458.5h1M22 458.5h48M0 460.5h4M5 460.5h1M7 460.5h36M0 464.5h6M7 464.5h8M16 464.5h4M21 464.5h6M0 472.5h1M2 472.5h8M11 472.5h8M20 472.5h4M25 472.5h6M32 472.5h6M0 488.5h1M2 488.5h8M11 488.5h7M19 488.5h3M23 488.5h8M32 488.5h6M39 488.5h2M42 488.5h8" stroke="#75715e" stroke-opacity="0.27" fill="none"/>
<path d="M0 7.5h5M6 7.5h4M11 7.5h2M14 7.5h3M18 7.5h5M0 9.5h4M5 9.5h2M8 9.5h2M11 9.5h3M15 9.5h7M23 9.5h4M28 9.5h2M31 9.5h4M36 9.5h5M0 27.5h7M8 27.5h3M12 27.5h6M19 27.5h6M4 35.5h7M12 35.5h2M15 35.5h1M17 35.5h7M25 35.5h8M34 35.5h2M37 35.5h4M8 39.5h4M13 39.5h3M17 39.5h6M24 39.5h4M29 39.5h6M8 41.5h4M13 41.5h3M17 41.5h3M21 41.5h13M35 41.5h3M39 41.5h6M46 41.5h9M56 41.5h3M60 41.5h6M67 41.5h2M70 41.5h3M74 41.5h2M12 65.5h8M21 65.5h2M24 65.5h8M33 65.5h2M36 65.5h3M40 65.5h4M45 65.5h6M52 65.5h4M57 65.5h3M61 65.5h9M71 65.5h4M12 87.5h7M20 87.5h2M23 87.5h8M32 87.5h2M35 87.5h3M39 87.5h4M44 87.5h6M51 87.5h4M56 87.5h3M60 87.5h6M67 87.5h9M12 89.5h4M17 89.5h3M21 89.5h3M25 89.5h22M48 89.5h3M52 89.5h6M59 89.5h9M69 89.5h6M4 109.5h6M11 109.5h4M16 109.5h11M0 115.5h7M8 115.5h8M17 115.5h6M0 121.5h11M12 121.5h5M0 127.5h7M8 127.5h9M18 127.5h8M27 127.5h5M0 135.5h5M6 135.5h2M9 135.5h1M11 135.5h7M19 135.5h5M0 137.5h4M5 137.5h1M7 137.5h29M0 141.5h4M5 141.5h9M15 141.5h6M0 169.5h4M5 169.5h3M9 169.5h6M0 191.5h4M5 191.5h5M11 191.5h5M0 199.5h7M8 199.5h5M0 201.5h1M2 201.5h18M21 201.5h1M0 203.5h1M3 203.5h4M0 205.5h1M4 205.5h1M0 207.5h1M4 207.5h8M0 209.5h1M3 209.5h2M0 211.5h1M3 211.5h3M0 213.5h1M3 213.5h1M17 213.5h1M0 217.5h6M7 217.5h5M0 219.5h1M2 219.5h18M21 219.5h1M0 221.5h1M3 221.5h2M0 223.5h1M3 223.5h4M0 225.5h1M3 225.5h1M0 227.5h1M3 227.5h2M0 229.5h1M3 229.5h4M0 231.5h1M3 231.5h4M17 231.5h1M0 235.5h10M0 237.5h1M2 237.5h18M21 237.5h1M0 239.5h1M4 239.5h1M0 241.5h1M3 241.5h1M0 273.5h1M2 273.5h4M7 273.5h4M12 273.5h8M0 295.5h5M6 295.5h4M11 295.5h7M19 295.5h4M24 295.5h10M35 295.5h5M26 307.5h1M28 307.5h4M33 307.5h4M38 307.5h12M26 309.5h1M28 309.5h4M33 309.5h4M38 309.5h12M0 319.5h1M2 319.5h4M7 319.5h4M12 319.5h11M24 319.5h10M35 319.5h5M37 337.5h1M39 337.5h4M44 337.5h2M47 337.5h5M37 339.5h1M39 339.5h4M44 339.5h2M47 339.5h5M37 341.5h1M39 341.5h2M42 341.5h4M37 343.5h1M39 343.5h4M44 343.5h4M37 347.5h1M39 347.5h2M42 347.5h2M45 347.5h4M50 347.5h4M37 353.5h1M39 353.5h4M44 353.5h2M47 353.5h5M37 359.5h1M39 359.5h4M44 359.5h4M37 363.5h1M39 363.5h2M42 363.5h2M45 363.5h4M50 363.5h4M0 373.5h1M2 373.5h3M6 373.5h8M0 383.5h1M2 383.5h8M11 383.5h5M17 383.5h13M0 449.5h6M7 449.5h8M16 449.5h4M21 449.5h6M0 451.5h15M16 451.5h1M18 451.5h40M0 453.5h4M5 453.5h1M7 453.5h28M0 457.5h6M7 457.5h8M16 457.5h4M21 457.5h6M0 459.5h19M20 459.5h1M22 459.5h48M0 461.5h4M5 461.5h1M7 461.5h36M0 465.5h6M7 465.5h8M16 465.5h4M21 465.5h6M0 473.5h1M2 473.5h8M11 473.5h8M20 473.5h4M25 473.5h6M32 473.5h6M0 489.5h1M2 489.5h8M11 489.5h7M19 489.5h3M23 489.5h8M32 489.5h6M39 489.5h2M42 489.5h8" stroke="#75715e" stroke-opacity="0.12" fill="none"/>
<path d="M14 2.5h12M27 2.5h15M43 2.5h3M47 2.5h15M63 2.5h12M10 10.5h26M31 22.5h15M70 44.5h6M50 48.5h26M14 52.5h3M18 52.5h7M26 52.5h8M35 52.5h2M38 52.5h3M42 52.5h7M50 52.5h5M56 52.5h2M59 52.5h6M66 52.5h2M69 52.5h7M18 76.5h7M26 76.5h5M32 76.5h1M34 76.5h3M38 76.5h8M47 76.5h2M50 76.5h3M54 76.5h7M62 76.5h4M67 76.5h1M63 96.5h13M18 102.5h7M26 102.5h5M32 102.5h1M34 102.5h3M38 102.5h8M47 102.5h2M50 102.5h3M54 102.5h9M16 162.5h2M20 274.5h2M20 290.5h2M16 298.5h5M22 298.5h4M27 298.5h11M39 298.5h1M41 298.5h8M15 306.5h8M15 308.5h8M16 320.5h5M22 320.5h11M34 320.5h12M17 336.5h14M17 338.5h7M25 338.5h4M17 340.5h4M17 342.5h6M17 344.5h2M17 346.5h5M17 348.5h2M17 350.5h2M17 352.5h14M17 354.5h2M17 356.5h2M17 358.5h6M17 360.5h2M17 362.5h5M20 406.5h2M16 410.5h6M23 410.5h14M17 474.5h2M17 476.5h2M20 490.5h2M20 492.5h6M20 514.5h2M16 516.5h9M26 516.5h4M31 516.5h6M38 516.5h8" stroke="#e6db74" stroke-opacity="0.46" fill="none"/>
<path d="M14 3.5h12M27 3.5h15M43 3.5h3M47 3.5h15M63 3.5h12M10 11.5h26M31 23.5h15M70 45.5h6M50 49.5h26M14 53.5h3M18 53.5h7M26 53.5h8M35 53.5h2M38 53.5h3M42 53.5h7M50 53.5h5M56 53.5h2M59 53.5h6M66 53.5h2M69 53.5h7M18 77.5h7M26 77.5h5M32 77.5h1M34 77.5h3M38 77.5h8M47 77.5h2M50 77.5h3M54 77.5h7M62 77.5h4M67 77.5h1M63 97.5h13M18 103.5h7M26 103.5h5M32 103.5h1M34 103.5h3M38 103.5h8M47 103.5h2M50 103.5h3M54 103.5h9M16 163.5h2M20 275.5h2M20 291.5h2M16 299.5h5M22 299.5h4M27 299.5h11M39 299.5h1M41 299.5h8M15 307.5h8M15 309.5h8M16 321.5h5M22 321.5h11M34 321.5h12M17 337.5h14M17 339.5h7M25 339.5h4M17 341.5h4M17 343.5h6M17 345.5h2M17 347.5h5M17 349.5h2M17 351.5h2M17 353.5h14M17 355.5h2M17 357.5h2M17 359.5h6M17 361.5h2M17 363.5h5M20 407.5h2M16 411.5h6M23 411.5h14M17 475.5h2M17 477.5h2M20 491.5h2M20 493.5h6M20 515.5h2M16 517.5h9M26 517.5h4M31 517.5h6M38 517.5h8" stroke="#e6db74" stroke-opacity="0.21" fill="none"/>
<path d="M12 2.5h1M8 10.5h1M0 12.5h2M3 12.5h3M4 14.5h3M4 18.5h6M8 20.5h4M10 22.5h1M20 22.5h1M29 22.5h1M7 28.5h1M0 32.5h2M4 36.5h3M8 42.5h2M25 44.5h1M8 46.5h4M25 48.5h1M4 50.5h6M0 58.5h4M4 60.5h2M8 62.5h3M12 66.5h2M29 68.5h1M12 70.5h4M29 72.5h1M8 74.5h6M69 76.5h1M4 80.5h4M8 84.5h3M12 90.5h2M29 92.5h1M12 94.5h4M29 96.5h1M8 100.5h6M9 116.5h1M5 128.5h1M5 130.5h1M13 142.5h1M13 144.5h1M13 146.5h1M13 148.5h1M13 150.5h1M15 154.5h1M54 156.5h1M62 158.5h1M14 162.5h1M14 164.5h1M13 170.5h1M13 172.5h1M13 174.5h1M13 176.5h1M13 178.5h1M13 180.5h1M13 182.5h1M10 192.5h1M10 194.5h1M19 244.5h1M19 246.5h1M19 248.5h1M19 250.5h1M52 254.5h1M18 258.5h1M18 260.5h1M18 262.5h1M18 264.5h1M47 268.5h1M18 274.5h1M18 276.5h1M19 278.5h1M18 280.5h1M18 282.5h1M18 284.5h1M18 286.5h1M18 288.5h1M18 290.5h1M14 298.5h1M67 302.5h1M13 306.5h1M13 308.5h1M5 312.5h1M74 314.5h1M14 320.5h1M66 324.5h1M14 328.5h1M12 332.5h1M40 332.5h1M56 332.5h1M13 334.5h1M5 366.5h1M74 368.5h1M8 374.5h1M8 376.5h1M8 378.5h1M18 384.5h1M19 386.5h1M18 388.5h1M18 390.5h1M18 392.5h1M18 396.5h1M18 398.5h1M18 400.5h1M18 402.5h1M19 404.5h1M18 406.5h1M14 410.5h1M6 430.5h1M6 432.5h1M0 434.5h5M12 434.5h1M6 436.5h1M22 436.5h3M28 436.5h2M40 438.5h1M45 438.5h1M40 440.5h1M45 440.5h1M40 442.5h1M45 442.5h1M8 444.5h1M16 444.5h1M19 466.5h1M4 468.5h1M15 474.5h1M15 476.5h1M15 478.5h1M15 480.5h1M15 482.5h1M15 484.5h1M18 490.5h1M18 492.5h1M18 494.5h1M18 496.5h1M18 498.5h1M22 500.5h1M18 504.5h1M18 506.5h1M18 508.5h1M18 510.5h1M19 512.5h1M18 514.5h1M14 516.5h1M16 522.5h1" stroke="#f92672" stroke-opacity="0.6" fill="none"/>
<path d="M12 3.5h1M8 11.5h1M0 13.5h2M3 13.5h3M4 15.5h3M4 19.5h6M8 21.5h4M10 23.5h1M20 23.5h1M29 23.5h1M7 29.5h1M0 33.5h2M4 37.5h3M8 43.5h2M25 45.5h1M8 47.5h4M25 49.5h1M4 51.5h6M0 59.5h4M4 61.5h2M8 63.5h3M12 67.5h2M29 69.5h1M12 71.5h4M29 73.5h1M8 75.5h6M69 77.5h1M4 81.5h4M8 85.5h3M12 91.5h2M29 93.5h1M12 95.5h4M29 97.5h1M8 101.5h6M9 117.5h1M5 129.5h1M5 131.5h1M13 143.5h1M13 145.5h1M13 147.5h1M13 149.5h1M13 151.5h1M15 155.5h1M54 157.5h1M62 159.5h1M14 163.5h1M14 165.5h1M13 171.5h1M13 173.5h1M13 175.5h1M13 177.5h1M13 179.5h1M13 181.5h1M13 183.5h1M10 193.5h1M10 195.5h1M19 245.5h1M19 247.5h1M19 249.5h1M19 251.5h1M52 255.5h1M18 259.5h1M18 261.5h1M18 263.5h1M18 265.5h1M47 269.5h1M18 275.5h1M18 277.5h1M19 279.5h1M18 281.5h1M18 283.5h1M18 285.5h1M18 287.5h1M18 289.5h1M18 291.5h1M14 299.5h1M67 303.5h1M13 307.5h1M13 309.5h1M5 313.5h1M74 315.5h1M14 321.5h1M66 325.5h1M14 329.5h1M12 333.5h1M40 333.5h1M56 333.5h1M13 335.5h1M5 367.5h1M74 369.5h1M8 375.5h1M8 377.5h1M8 379.5h1M18 385.5h1M19 387.5h1M18 389.5h1M18 391.5h1M18 393.5h1M18 397.5h1M18 399.5h1M18 401.5h1M18 403.5h1M19 405.5h1M18 407.5h1M14 411.5h1M6 431.5h1M6 433.5h1M0 435.5h5M12 435.5h1M6 437.5h1M22 437.5h3M28 437.5h2M40 439.5h1M45 439.5h1M40 441.5h1M45 441.5h1M40 443.5h1M45 443.5h1M8 445.5h1M16 445.5h1M19 467.5h1M4 469.5h1M15 475.5h1M15 477.5h1M15 479.5h1M15 481.5h1M15 483.5h1M15 485.5h1M18 491.5h1M18 493.5h1M18 495.5h1M18 497.5h1M18 499.5h1M22 501.5h1M18 505.5h1M18 507.5h1M18 509.5h1M18 511.5h1M19 513.5h1M18 515.5h1M14 517.5h1M16 523.5h1" stroke="#f92672" stroke-opacity="0.27" fill="none"/>
<path d="M18 54.5h1M22 78.5h1M22 104.5h1M24 130.5h1M27 130.5h2M31 130.5h2M35 130.5h1M38 130.5h1M41 130.5h2M45 130.5h2M15 142.5h1M25 164.5h1M15 170.5h1M15 172.5h1M12 192.5h4M20 276.5h1M20 280.5h1M20 282.5h1M20 284.5h1M20 286.5h1M20 288.5h1M10 306.5h1M10 308.5h1M16 328.5h1M58 332.5h1M20 384.5h1M20 396.5h1M20 398.5h1M27 416.5h1M30 416.5h1M27 418.5h1M30 418.5h1M27 420.5h1M30 420.5h1M27 422.5h1M30 422.5h1M27 424.5h1M30 424.5h1M27 426.5h1M30 426.5h1M8 430.5h2M8 432.5h1M14 434.5h1M11 438.5h1M42 438.5h2M47 438.5h1M11 440.5h1M42 440.5h2M47 440.5h1M11 442.5h1M42 442.5h2M47 442.5h1M18 444.5h1M17 478.5h1M17 480.5h1M17 482.5h3M17 484.5h3M20 494.5h1M20 496.5h3M20 498.5h3M24 500.5h6M20 504.5h1M20 506.5h1M28 522.5h1" stroke="#ae81ff" stroke-opacity="0.7" fill="none"/>
<path d="M18 55.5h1M22 79.5h1M22 105.5h1M24 131.5h1M27 131.5h2M31 131.5h2M35 131.5h1M38 131.5h1M41 131.5h2M45 131.5h2M15 143.5h1M25 165.5h1M15 171.5h1M15 173.5h1M12 193.5h4M20 277.5h1M20 281.5h1M20 283.5h1M20 285.5h1M20 287.5h1M20 289.5h1M10 307.5h1M10 309.5h1M16 329.5h1M58 333.5h1M20 385.5h1M20 397.5h1M20 399.5h1M27 417.5h1M30 417.5h1M27 419.5h1M30 419.5h1M27 421.5h1M30 421.5h1M27 423.5h1M30 423.5h1M27 425.5h1M30 425.5h1M27 427.5h1M30 427.5h1M8 431.5h2M8 433.5h1M14 435.5h1M11 439.5h1M42 439.5h2M47 439.5h1M11 441.5h1M42 441.5h2M47 441.5h1M11 443.5h1M42 443.5h2M47 443.5h1M18 445.5h1M17 479.5h1M17 481.5h1M17 483.5h3M17 485.5h3M20 495.5h1M20 497.5h3M20 499.5h3M24 501.5h6M20 505.5h1M20 507.5h1M28 523.5h1" stroke="#ae81ff" stroke-opacity="0.32" fill="none"/>
<path d="M15 12.5h6M11 16.5h8M9 28.5h7M17 28.5h6M27 44.5h5M40 44.5h13M27 48.5h5M40 48.5h9M8 52.5h5M12 54.5h4M31 68.5h5M44 68.5h16M31 72.5h5M44 72.5h12M12 76.5h5M16 78.5h4M31 92.5h5M44 92.5h22M31 96.5h5M44 96.5h18M12 102.5h5M16 104.5h4M17 110.5h16M11 116.5h9M9 122.5h18M7 128.5h5M12 130.5h11M17 154.5h15M71 156.5h5M69 254.5h7M64 268.5h12M22 312.5h23M10 336.5h6M10 338.5h6M10 340.5h6M10 342.5h6M10 344.5h6M10 346.5h6M10 348.5h6M10 350.5h6M10 352.5h6M10 354.5h6M10 356.5h6M10 358.5h6M10 360.5h6M10 362.5h6M22 366.5h23M10 374.5h8M15 376.5h4M18 378.5h11M19 416.5h6M19 418.5h6M19 420.5h6M19 422.5h6M19 424.5h6M19 426.5h6M31 436.5h5M14 438.5h6M21 438.5h5M14 440.5h6M21 440.5h5M14 442.5h6M21 442.5h5M21 466.5h19M25 468.5h11" stroke="#66d9ef" stroke-opacity="0.52" fill="none"/>
<path d="M15 13.5h6M11 17.5h8M9 29.5h7M17 29.5h6M27 45.5h5M40 45.5h13M27 49.5h5M40 49.5h9M8 53.5h5M12 55.5h4M31 69.5h5M44 69.5h16M31 73.5h5M44 73.5h12M12 77.5h5M16 79.5h4M31 93.5h5M44 93.5h22M31 97.5h5M44 97.5h18M12 103.5h5M16 105.5h4M17 111.5h16M11 117.5h9M9 123.5h18M7 129.5h5M12 131.5h11M17 155.5h15M71 157.5h5M69 255.5h7M64 269.5h12M22 313.5h23M10 337.5h6M10 339.5h6M10 341.5h6M10 343.5h6M10 345.5h6M10 347.5h6M10 349.5h6M10 351.5h6M10 353.5h6M10 355.5h6M10 357.5h6M10 359.5h6M10 361.5h6M10 363.5h6M22 367.5h23M10 375.5h8M15 377.5h4M18 379.5h11M19 417.5h6M19 419.5h6M19 421.5h6M19 423.5h6M19 425.5h6M19 427.5h6M31 437.5h5M14 439.5h6M21 439.5h5M14 441.5h6M21 441.5h5M14 443.5h6M21 443.5h5M21 467.5h19M25 469.5h11" stroke="#66d9ef" stroke-opacity="0.23" fill="none"/>
</svg></div>
    <div id="vsb"><i></i></div>
    <div id="hsbar"><i></i></div>
  </div>
  <div id="edge"></div>
  <div id="status">
    <svg style="left:12px;top:6px" width="15" height="13"><rect x=".5" y=".5" width="13" height="11" rx="1.5" fill="#cfd2da" stroke="#7f8289"/><path d="M1 1.5H4.5V10.5H1Z" fill="#7f8289"/></svg>
    <span style="left:37px">Line 307, Column 43</span>
    <span style="left:681px">Tab Size: 2</span>
    <span style="left:790px">Python</span>
  </div>
</div>

<!--/SUBLIME-->
<div id="sublb"></div>
</body></html>
